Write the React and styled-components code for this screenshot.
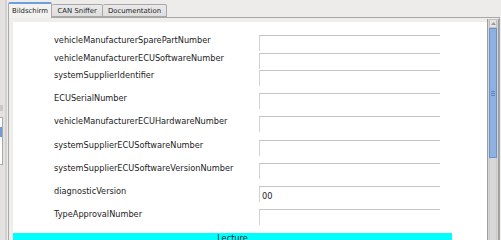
import React from 'react';
import styled, { createGlobalStyle } from 'styled-components';

const Global = createGlobalStyle`
  html, body { margin: 0; padding: 0; }
  body { background: #edeceb; font-family: "DejaVu Sans", sans-serif; }
`;

const Window = styled.div`
  width: 501px;
  height: 240px;
  overflow: hidden;
  display: flex;
  background: #edeceb;
`;

const SidePanel = styled.div`
  width: 7px;
  flex: none;
  box-sizing: border-box;
  background: #e3e2e1;
  border-right: 2px solid #d3d2d1;
  display: flex;
  flex-direction: column;
  padding-top: 105px;
`;

const SideButton = styled.div`
  width: 3px;
  height: 6px;
  background: #c9c8c7;
`;

const SideList = styled.div`
  margin-top: 6px;
  width: 3px;
  height: 48px;
  box-sizing: border-box;
  background: #fff;
  border-top: 1px solid #a9a9a9;
  border-bottom: 1px solid #a9a9a9;
  border-right: 1px solid #a9a9a9;
  padding-top: 9px;
`;

const SideSelection = styled.div`
  height: 10px;
  background: #6f9bd6;
`;

const TabPane = styled.div`
  flex: 1;
  display: flex;
  flex-direction: column;
  padding: 2px 1px 0 1px;
  min-width: 0;
`;

const TabBar = styled.div`
  height: 15px;
  display: flex;
  align-items: flex-end;
  position: relative;
  z-index: 1;
`;

const Tab = styled.div`
  box-sizing: border-box;
  height: ${p => (p.$active ? 16 : 13)}px;
  margin-bottom: ${p => (p.$active ? -1 : 0)}px;
  padding: 0 ${p => p.$pad}px;
  display: flex;
  align-items: center;
  font-size: 6.9px;
  color: #1e1e1e;
  white-space: nowrap;
  background: ${p => (p.$active ? '#f3f2f1' : 'linear-gradient(#eaeaea, #dedede)')};
  border: 1px solid #a8a8a8;
  border-bottom: ${p => (p.$active ? 'none' : '1px solid #a8a8a8')};
  border-left: ${p => (p.$first ? '1px solid #a8a8a8' : 'none')};
  border-top: ${p => (p.$active ? '2px solid #6d9ee0' : '1px solid #a8a8a8')};
  border-radius: 2px 2px 0 0;
`;

const Content = styled.div`
  flex: 1;
  display: flex;
  box-sizing: border-box;
  border: 1px solid #a8a8a8;
  border-bottom: none;
  padding-top: 1px;
  background: #edeceb;
  min-height: 0;
`;

const Viewport = styled.div`
  flex: 1;
  min-width: 0;
  background: #efeeed;
  padding: 3px 0 0 4px;
  overflow: hidden;
`;

const Panel = styled.div`
  background: #fff;
  height: 100%;
  padding-top: 13px;
  box-sizing: border-box;
`;

const Row = styled.div`
  display: flex;
  align-items: flex-start;
  height: ${p => p.$h}px;
`;

const Label = styled.div`
  width: 205px;
  padding-left: 41px;
  flex: none;
  font-size: 8.2px;
  line-height: 10px;
  color: #232323;
  white-space: nowrap;
`;

const Field = styled.div`
  width: 181px;
  height: 16px;
  box-sizing: border-box;
  border-top: 1px solid #c4c4c4;
  border-left: 1px solid #d3d3d3;
  background: #fff;
  padding: 4px 0 0 2px;
  font-size: 8.2px;
  line-height: 10px;
  color: #232323;
`;

const ActionBar = styled.div`
  width: 439px;
  height: 20px;
  background: #00ffff;
  text-align: center;
  font-size: 8.2px;
  line-height: 10px;
  color: #1a1a1a;
`;

const Scrollbar = styled.div`
  width: 12px;
  flex: none;
  box-sizing: border-box;
  border-left: 1px solid #9d9d9d;
  border-right: 1px solid #9d9d9d;
  background: #d6d6d6;
  padding: 0 1px;
  display: flex;
  flex-direction: column;
`;

const ArrowButton = styled.div`
  height: 9px;
  background: #e4e4e4;
  border: 1px solid #c2c2c2;
  box-sizing: border-box;
  display: flex;
  align-items: center;
  justify-content: center;
`;

const Thumb = styled.div`
  height: 130px;
  box-sizing: border-box;
  background: #8eb1e2;
  border: 1px solid #6c92c9;
  display: flex;
  align-items: center;
  justify-content: center;
`;

const Grip = styled.div`
  width: 4px;
  height: 5px;
  background: repeating-linear-gradient(#5f84bb 0 1px, transparent 1px 2px);
`;

const Track = styled.div`
  flex: 1;
  background: #d8d8d8;
  border-left: 1px solid #cacaca;
  border-right: 1px solid #cacaca;
`;

const fields = [
  ['vehicleManufacturerSparePartNumber', '', 18],
  ['vehicleManufacturerECUSoftwareNumber', '', 17],
  ['systemSupplierIdentifier', '', 23],
  ['ECUSerialNumber', '', 23],
  ['vehicleManufacturerECUHardwareNumber', '', 24],
  ['systemSupplierECUSoftwareNumber', '', 23],
  ['systemSupplierECUSoftwareVersionNumber', '', 23],
  ['diagnosticVersion', '00', 23],
  ['TypeApprovalNumber', '', 24],
];

export default function App() {
  return (
    <>
      <Global />
      <Window>
        <SidePanel>
          <SideButton />
          <SideList>
            <SideSelection />
          </SideList>
        </SidePanel>
        <TabPane>
          <TabBar>
            <Tab $active $first $pad={3}>Bildschirm</Tab>
            <Tab $pad={5.5}>CAN Sniffer</Tab>
            <Tab $pad={4.5}>Documentation</Tab>
          </TabBar>
          <Content>
            <Viewport>
              <Panel>
                {fields.map(([name, value, h]) => (
                  <Row key={name} $h={h}>
                    <Label>{name}</Label>
                    <Field>{value}</Field>
                  </Row>
                ))}
                <ActionBar>Lecture</ActionBar>
              </Panel>
            </Viewport>
            <Scrollbar>
              <ArrowButton>
                <svg width="5" height="3" viewBox="0 0 5 3">
                  <path d="M0 3 L2.5 0 L5 3 Z" fill="#9a9a9a" />
                </svg>
              </ArrowButton>
              <Thumb>
                <Grip />
              </Thumb>
              <Track />
            </Scrollbar>
          </Content>
        </TabPane>
      </Window>
    </>
  );
}
